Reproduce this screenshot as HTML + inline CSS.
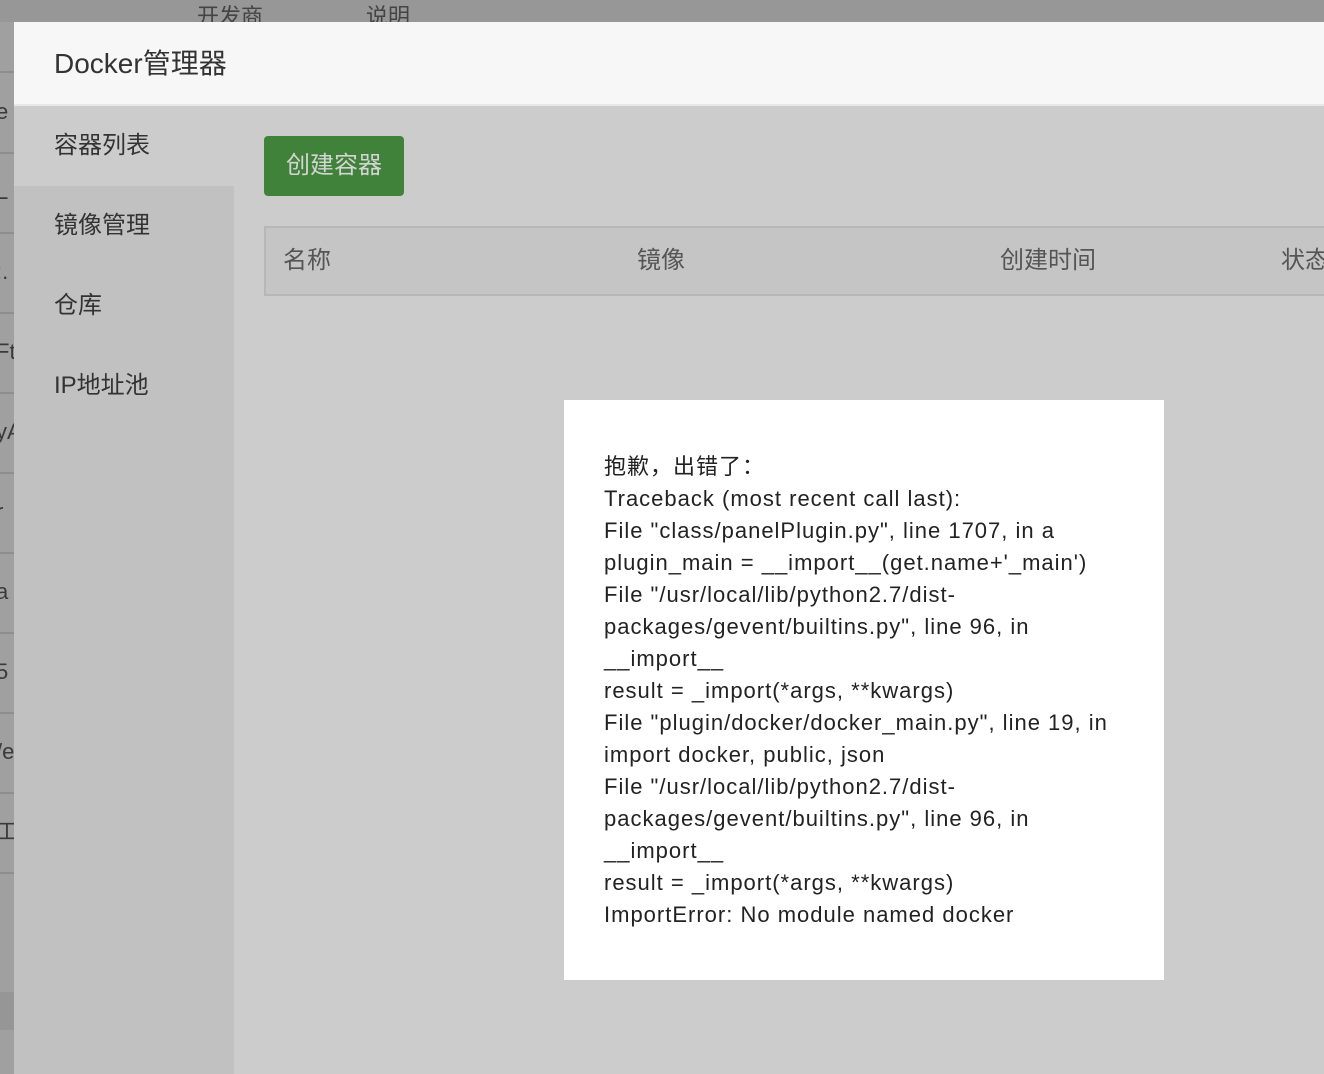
<!DOCTYPE html>
<html><head><meta charset="utf-8">
<style>
*{margin:0;padding:0;box-sizing:border-box}
body{width:1324px;height:1074px;overflow:hidden;background:#9c9c9c;font-family:"Liberation Sans","Noto Sans CJK SC",sans-serif;position:relative}
.abs{position:absolute}
.topbar{left:0;top:0;width:1324px;height:22px;background:#979797}
.topbar span{position:absolute;top:2px;font-size:22px;color:#444;line-height:30px}
.lstrip{left:0;top:22px;width:14px;height:1052px;background:#a0a0a0;overflow:hidden}
.lstrip .ln{position:absolute;left:0;width:14px;height:2px;background:#8e8e8e}
.lstrip .ch{position:absolute;left:-4px;font-size:22px;color:#3a3a3a;line-height:24px}
.hdr{left:14px;top:22px;width:1310px;height:84px;background:#f7f7f7;border-bottom:2px solid #e8e8e8}
.hdr div{position:absolute;left:40px;top:25px;font-size:28px;color:#333;line-height:34px}
.side{left:14px;top:106px;width:220px;height:968px;background:#c1c1c1}
.side .it{position:absolute;left:0;width:220px;height:80px;font-size:24px;color:#333;padding-left:40px;line-height:80px}
.content{left:234px;top:106px;width:1090px;height:968px;background:#cccccc}
.btn{left:264px;top:136px;width:140px;height:60px;background:#41823b;border-radius:4px;color:#d4d4d4;font-size:24px;line-height:60px;text-align:center}
.th{left:264px;top:226px;width:1070px;height:70px;background:#c5c5c5;border:2px solid #b7b7b7}
.th span{position:absolute;top:16px;font-size:24px;color:#555;line-height:34px}
.err{left:564px;top:400px;width:600px;height:580px;background:#fff;padding:51px 40px 0;font-size:22px;line-height:32px;color:#222;letter-spacing:1px}
</style></head><body>
<div class="abs topbar"><span style="left:197px">开发商</span><span style="left:366px">说明</span></div>
<div class="abs lstrip">
<div class="ln" style="top:49px"></div><div class="ch" style="top:78px">e</div>
<div class="ln" style="top:130px"></div><div class="ch" style="top:158px">L</div>
<div class="ln" style="top:210px"></div><div class="ch" style="top:238px">:.</div>
<div class="ln" style="top:290px"></div><div class="ch" style="top:318px">Ft</div>
<div class="ln" style="top:370px"></div><div class="ch" style="top:398px">yA</div>
<div class="ln" style="top:450px"></div><div class="ch" style="top:478px">r</div>
<div class="ln" style="top:530px"></div><div class="ch" style="top:558px">a</div>
<div class="ln" style="top:610px"></div><div class="ch" style="top:638px">5</div>
<div class="ln" style="top:690px"></div><div class="ch" style="top:718px">/e</div>
<div class="ln" style="top:770px"></div><div class="ch" style="top:798px">工</div>
<div class="ln" style="top:850px"></div>
<div style="position:absolute;left:0;top:970px;width:14px;height:38px;background:#969696"></div>
</div>
<div class="abs hdr"><div>Docker管理器</div></div>
<div class="abs side">
<div class="it" style="top:0;background:#cccccc">容器列表</div>
<div class="it" style="top:80px">镜像管理</div>
<div class="it" style="top:160px">仓库</div>
<div class="it" style="top:240px">IP地址池</div>
</div>
<div class="abs content"></div>
<div class="abs btn">创建容器</div>
<div class="abs th"><span style="left:17px">名称</span><span style="left:371px">镜像</span><span style="left:734px">创建时间</span><span style="left:1015px">状态</span></div>
<div class="abs err">抱歉，出错了：<br>Traceback (most recent call last):<br>File "class/panelPlugin.py", line 1707, in a<br>plugin_main = __import__(get.name+'_main')<br>File "/usr/local/lib/python2.7/dist-<br>packages/gevent/builtins.py", line 96, in<br>__import__<br>result = _import(*args, **kwargs)<br>File "plugin/docker/docker_main.py", line 19, in<br>import docker, public, json<br>File "/usr/local/lib/python2.7/dist-<br>packages/gevent/builtins.py", line 96, in<br>__import__<br>result = _import(*args, **kwargs)<br>ImportError: No module named docker</div>
</body></html>
